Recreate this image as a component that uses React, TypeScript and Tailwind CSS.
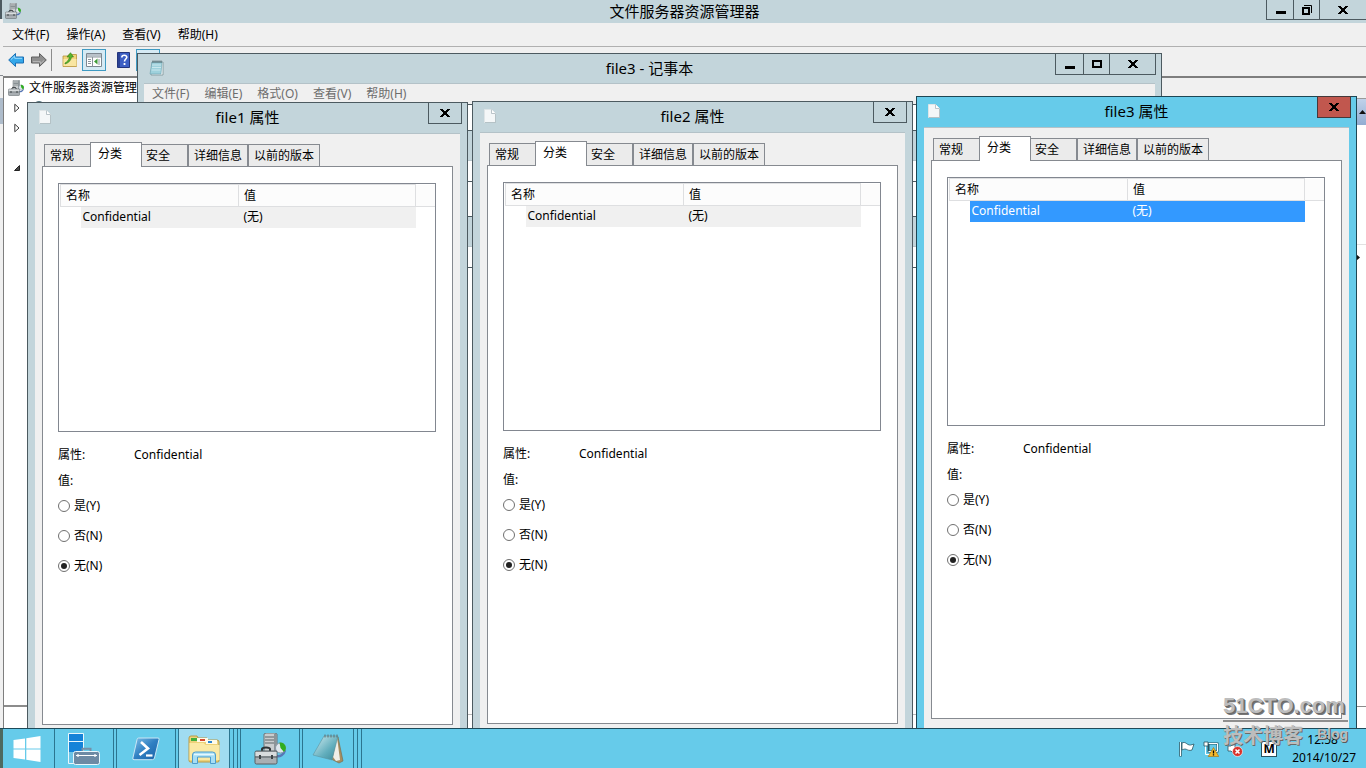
import React, { useState } from "react";
import clsx from "clsx";

const menus = ["文件(F)", "操作(A)", "查看(V)", "帮助(H)"];
const notepadMenus = ["文件(F)", "编辑(E)", "格式(O)", "查看(V)", "帮助(H)"];

function CloseGlyph() {
    return (
        <svg width="10" height="8" viewBox="0 0 10 8" shapeRendering="crispEdges" aria-hidden="true">
            <path
                d="M0 0h3v1h1v1h2V1h1V0h3v1H9v1H8v1H7v2h1v1h1v1h1v1H7V7H6V6H4v1H3v1H0V7h1V6h1V5h1V3H2V2H1V1H0z"
                fill="#000"
            />
        </svg>
    );
}

function MinimizeGlyph() {
    return (
        <svg width="10" height="9" viewBox="0 0 10 9" aria-hidden="true">
            <path d="M0 6h10v3H0z" fill="#000" />
        </svg>
    );
}

function MaximizeGlyph() {
    return (
        <svg width="10" height="8" viewBox="0 0 10 8" aria-hidden="true">
            <path d="M1 1h8v6H1z" fill="none" stroke="#000" strokeWidth="2" />
        </svg>
    );
}

function RestoreGlyph() {
    return (
        <svg width="10" height="10" viewBox="0 0 10 10" aria-hidden="true">
            <path d="M1 3h6v6H1z" fill="none" stroke="#000" strokeWidth="2" />
            <path d="M2 0.5h7.5V8" fill="none" stroke="#000" />
        </svg>
    );
}

function ServerIcon({ className }: { className?: string }) {
    return (
        <svg className={className} viewBox="0 0 32 32" aria-hidden="true">
            <path d="M10 1l2-1h9l2 1v18H10z" fill="#c9cdcf" stroke="#6b7377" />
            <path d="M20 1h3v18h-3z" fill="#8c9498" />
            <path d="M11 4h9M11 7h9M11 10h9" stroke="#5d666a" strokeWidth="1.2" />
            <path d="M31 17c-1 5-5 7-9 6" fill="none" stroke="#5877b5" strokeWidth="2.4" />
            <circle cx="26.500" cy="15" r="5" fill="#dfe6ec" stroke="#8b97a5" />
            <path d="M26.500 15l-1-5.500a5.500 5.500 0 0 1 4.500 9.500z" fill="#2fae1f" />
            <path d="M8 19v-3c0-2 8-2 8 0v3" fill="none" stroke="#2f3437" strokeWidth="2" />
            <rect x="1" y="18" width="22" height="13" rx="1.5" fill="#a9afb3" stroke="#565e62" />
            <path d="M1.5 19h21v4h-21z" fill="#d8dcde" />
            <path d="M1 24h22" stroke="#555d61" />
            <path d="M5 22h2v4H5zM17 22h2v4h-2z" fill="#3d4447" />
        </svg>
    );
}

function NotepadIcon() {
    return (
        <svg className="h-4 w-4" viewBox="0 0 16 16" aria-hidden="true">
            <path d="M3 2h11v13H2z" fill="#f7fbfc" stroke="#7b9298" strokeWidth="0.8" />
            <path d="M3 2h10l-1 12H1z" fill="#9ed1dc" stroke="#6aa3b0" strokeWidth="0.6" />
            <path d="M3 5h9M3 7.5h9M2.5 10h9" stroke="#d4edf2" strokeWidth="0.8" />
            <path d="M4 0.5v2.5M6 0.5v2.5M8 0.5v2.5M10 0.5v2.5M12 0.5v2.5" stroke="#4b5d62" strokeWidth="0.9" />
        </svg>
    );
}

function FileIcon() {
    return (
        <svg className="h-[14px] w-3" viewBox="0 0 12 14" aria-hidden="true">
            <path d="M0.5 0.5h7l4 4v9H0.5z" fill="#f4f7f8" stroke="#dfe5e7" />
            <path d="M7.5 0.5v4h4" fill="#fff" stroke="#a9b6bb" strokeWidth="0.8" />
            <path d="M11.6 5v8.6H1" fill="none" stroke="#a5b4b9" strokeWidth="0.8" />
        </svg>
    );
}

function ArrowIcon({ back }: { back?: boolean }) {
    return (
        <svg className={clsx("h-4 w-4", !back && "rotate-180")} viewBox="0 0 16 16" aria-hidden="true">
            <path
                d="M0.7 8L7.5 1.5V5h8v6h-8v3.5z"
                fill={back ? "#35a8ea" : "#8f8f8f"}
                stroke={back ? "#1b6fb4" : "#5e5e5e"}
            />
            <path d="M3 7.5L6.7 4v2.3H14" fill="none" stroke={back ? "#9bdcff" : "#bdbdbd"} />
        </svg>
    );
}

function UpFolderIcon() {
    return (
        <svg className="h-4 w-4" viewBox="0 0 16 16" aria-hidden="true">
            <path d="M1 4h5l1-1.5h7.5v12H1z" fill="#f1d47b" stroke="#b8933a" strokeWidth="0.8" />
            <path d="M1.5 7h13v7h-13z" fill="#f9e6a2" />
            <path d="M3 11c2-1 4-3 4.500-6H5L8.500 0.700 11.500 5H9.500C9 8.500 6.500 11 3 12z" fill="#58b52c" stroke="#2f7d18" strokeWidth="0.6" />
        </svg>
    );
}

function ConsoleIcon() {
    return (
        <svg className="h-4 w-4" viewBox="0 0 16 16" aria-hidden="true">
            <path d="M0.5 1.500h15v13H0.5z" fill="#fff" stroke="#7d8790" />
            <path d="M1 2h14v2.500H1z" fill="#b9c2ca" />
            <path d="M1 5h14M6.500 5v9.500" stroke="#8b959d" />
            <path d="M2 7.500h3M2 9.500h3M2 11.500h3M13 7v6" stroke="#8b959d" />
            <path d="M11.500 6.500v6L8 9.500z" fill="#3d9b35" />
        </svg>
    );
}

function HelpIcon() {
    return (
        <svg className="h-4 w-[13px]" viewBox="0 0 13 16" aria-hidden="true">
            <path d="M0.5 0.5h12v15H0.5z" fill="#3d5fc4" stroke="#23357c" />
            <path d="M1 1h2v14H1z" fill="#2b4295" />
            <path d="M4.800 5.500C4.800 2.500 10 2.700 9.800 5.300 9.700 7 7.500 7.200 7.500 9.500" fill="none" stroke="#fff" strokeWidth="1.600" />
            <path d="M6.600 11h1.800v2H6.600z" fill="#fff" />
        </svg>
    );
}

function WindowsIcon() {
    return (
        <svg className="h-[26px] w-7" viewBox="0 0 28 26" aria-hidden="true">
            <path d="M0.500 4L12 2.400v10H0.500zM13.300 2.200L27.500 0v12.400H13.300zM0.500 13.600H12v10L0.500 22zM13.300 13.600h14.200V26l-14.200-2.200z" fill="#fff" />
        </svg>
    );
}

function ServerManagerIcon() {
    return (
        <svg className="h-8 w-8" viewBox="0 0 32 32" aria-hidden="true">
            <path d="M0.500 0.500h15v30H0.500z" fill="#6cc5e8" stroke="#e9f7fc" />
            <path d="M1 1h14v7H1zM1 9h14v10H1z" fill="#1583d8" />
            <path d="M0.500 8.500h15" stroke="#e9f7fc" />
            <path d="M14.500 18.500v-2.700h8v2.700" fill="none" stroke="#7590a8" strokeWidth="2" />
            <rect x="5.500" y="18.500" width="26" height="13" rx="2" fill="#6d8aa4" stroke="#e9f7fc" />
            <path d="M8 22.500h21M10 21v3M27 21v3" stroke="#fff" strokeWidth="1.200" />
        </svg>
    );
}

function PowerShellIcon() {
    return (
        <svg className="h-6 w-7" viewBox="0 0 28 24" aria-hidden="true">
            <defs>
                <linearGradient id="psFill" x1="0" y1="0" x2="1" y2="1">
                    <stop offset="0" stopColor="#7fc0e8" />
                    <stop offset="0.5" stopColor="#2f7fc2" />
                    <stop offset="1" stopColor="#1b61a6" />
                </linearGradient>
            </defs>
            <path d="M6.500 1h19.500q1.500 0 1 1.600L22.500 21q-.5 1.700-2.200 1.700H2q-1.600 0-1.100-1.700L5 2.500Q5.300 1 6.500 1z" fill="url(#psFill)" stroke="#c9e6f5" />
            <path d="M9 5l7 6.500-8.500 6.500" fill="none" stroke="#fff" strokeWidth="2.600" />
            <path d="M14 18.500h6.500" stroke="#fff" strokeWidth="2.200" />
        </svg>
    );
}

function ExplorerIcon() {
    return (
        <svg className="h-[30px] w-8" viewBox="0 0 32 30" aria-hidden="true">
            <path d="M1 4q0-2 2-2h6l1 2h9l1 2h9q2 0 2 2v19q0 1-1.500 1H2.500Q1 28 1 26.500z" fill="#ecd27a" stroke="#b89a46" />
            <path d="M3 4h6v3H3z" fill="#3fae3d" />
            <path d="M9 4h11v4H9z" fill="#fffbe8" />
            <path d="M12 5h5v2h-5z" fill="#d7492e" />
            <path d="M18 6h11v4H18z" fill="#fffbe8" />
            <path d="M20 7h4v2h-4z" fill="#2e86d0" />
            <path d="M1.500 9h14l2 2h14v15H1.500z" fill="#fae9a5" />
            <path d="M4.500 29.500V21q0-3 3-3h17q3 0 3 3v8.500h-5V23h-13v6.500z" fill="#a6def5" stroke="#4d9ccc" />
            <path d="M6 20.500h20" stroke="#e6f8ff" strokeWidth="1.500" />
        </svg>
    );
}

function NotepadLargeIcon() {
    return (
        <svg className="h-[30px] w-8" viewBox="0 0 32 30" aria-hidden="true">
            <defs>
                <linearGradient id="padFill" x1="0" y1="0" x2="1" y2="1">
                    <stop offset="0" stopColor="#d4eef2" />
                    <stop offset="0.6" stopColor="#62aebd" />
                    <stop offset="1" stopColor="#3a8797" />
                </linearGradient>
            </defs>
            <path d="M26 3l5 24-4 2-8-4z" fill="#a58e62" stroke="#776646" strokeWidth="0.600" />
            <path d="M25 3l3 23-4 1-3-4z" fill="#f1efe8" />
            <path d="M12 2h14l-6 24L1 21z" fill="url(#padFill)" stroke="#5b94a0" strokeWidth="0.600" />
            <path d="M13 0.500v3M16 0.500v3M19 0.500v3M22 0.500v3M25 0.500v3" stroke="#5f6f73" />
        </svg>
    );
}

type TitleBarProps = {
    title: string;
    icon: React.ReactNode;
    children: React.ReactNode;
    className?: string;
};

function TitleBar({ title, icon, children, className }: TitleBarProps) {
    return (
        <header className={clsx("relative flex items-center justify-center pb-[2px]", className)}>
            <span className="absolute left-[11px]">{icon}</span>
            <h2 className="text-[15px] leading-5">{title}</h2>
            {children}
        </header>
    );
}

const captionButton = "flex items-center justify-center border-r border-[#4c5a60]";

type DialogProps = {
    name: string;
    active?: boolean;
    className: string;
};

function PropertiesDialog({ name, active, className }: DialogProps) {
    const [value, setValue] = useState("none");
    const tab = "h-[22px] border-t border-r border-[#868a90] bg-[#ebebeb] text-left";

    return (
        <section
            className={clsx(
                "absolute w-[441px] border px-[7px] pb-[7px]",
                active ? "border-[#1d4654] bg-[#66cbea]" : "border-[#4c5a60] bg-[#c3d5db]",
                className
            )}
        >
            <TitleBar title={`${name} 属性`} icon={<FileIcon />} className="-mx-[7px] h-[30px]">
                <button
                    aria-label="关闭"
                    className={clsx(
                        "absolute -top-px right-[5px] flex h-[22px] w-[34px] items-center justify-center border",
                        active ? "border-[#45383a] bg-[#c1574e]" : "border-[#4c5a60]"
                    )}
                >
                    <CloseGlyph />
                </button>
            </TitleBar>
            <div className="border-t border-[#b4c2c8] bg-[#f0f0f0] px-[7px] pt-2 pb-10">
                <div className="flex items-end pl-[2px]" role="tablist">
                    <button role="tab" className={clsx(tab, "w-[46px] border-r-0 border-l pl-[5px]")}>
                        常规
                    </button>
                    <button
                        role="tab"
                        aria-selected="true"
                        className="relative -mb-px h-[25px] w-[52px] border border-b-0 border-[#868a90] bg-white pb-[2px] pl-[7px] text-left"
                    >
                        分类
                    </button>
                    <button role="tab" className={clsx(tab, "w-[47px] border-r-2 pl-1")}>
                        安全
                    </button>
                    <button role="tab" className={clsx(tab, "w-[60px] border-r-2 pl-[5px]")}>
                        详细信息
                    </button>
                    <button role="tab" className={clsx(tab, "w-[71px] pl-[5px]")}>
                        以前的版本
                    </button>
                </div>
                <div className="min-h-[559px] border border-[#868a90] bg-white pt-4 pr-4 pl-[15px]">
                    <div className="h-[249px] border border-[#828790] pl-px">
                        <table className="w-full table-fixed border-collapse text-left">
                            <colgroup>
                                <col className="w-5" />
                                <col className="w-[158px]" />
                                <col className="w-[177px]" />
                                <col />
                            </colgroup>
                            <thead>
                                <tr className="h-[22px] bg-[#fcfcfc]">
                                    <th colSpan={2} className="border border-[#dedfe1] pl-[5px] font-normal">
                                        名称
                                    </th>
                                    <th className="border border-[#dedfe1] pl-[5px] font-normal">值</th>
                                    <th className="border-b border-[#dedfe1]"></th>
                                </tr>
                            </thead>
                            <tbody>
                                <tr className="h-[21px]">
                                    <td></td>
                                    <td className={clsx("pl-[2px]", active ? "bg-[#3399ff] text-white" : "bg-[#f0f0f0]")}>
                                        Confidential
                                    </td>
                                    <td className={clsx("pl-[5px]", active ? "bg-[#3399ff] text-white" : "bg-[#f0f0f0]")}>
                                        (无)
                                    </td>
                                    <td></td>
                                </tr>
                            </tbody>
                        </table>
                    </div>
                    <div className="mt-[14px] flex">
                        <span className="w-[76px]">属性:</span>
                        <span>Confidential</span>
                    </div>
                    <fieldset className="mt-2">
                        <legend>值:</legend>
                        <div className="mt-[7px] flex flex-col gap-3">
                            {[
                                ["yes", "是(Y)"],
                                ["no", "否(N)"],
                                ["none", "无(N)"],
                            ].map(([key, label]) => (
                                <label key={key} className="flex items-center gap-1">
                                    <input
                                        type="radio"
                                        name={name}
                                        checked={value === key}
                                        onChange={() => setValue(key)}
                                        className="h-3 w-3 appearance-none rounded-full border border-[#707070] bg-white bg-clip-content p-[2px] checked:bg-[#222222]"
                                    />
                                    {label}
                                </label>
                            ))}
                        </div>
                    </fieldset>
                </div>
            </div>
        </section>
    );
}

function Notepad() {
    return (
        <section className="absolute top-[53px] right-[204px] bottom-0 left-[137px] flex flex-col border border-b-0 border-[#4c5a60] bg-[#c3d5db] px-[6px]">
            <TitleBar title="file3 - 记事本" icon={<NotepadIcon />} className="-mx-[6px] h-[29px]">
                <div className="absolute -top-px right-[5px] flex h-[22px] border border-r-0 border-[#4c5a60]">
                    <button aria-label="最小化" className={clsx(captionButton, "w-7")}>
                        <MinimizeGlyph />
                    </button>
                    <button aria-label="最大化" className={clsx(captionButton, "w-[26px]")}>
                        <MaximizeGlyph />
                    </button>
                    <button aria-label="关闭" className={clsx(captionButton, "w-[46px]")}>
                        <CloseGlyph />
                    </button>
                </div>
            </TitleBar>
            <nav className="flex h-[21px] items-center gap-[15px] border-t border-[#b4c2c8] bg-[#f0f0f0] pl-2 text-[#6d6d6d]">
                {notepadMenus.map((item) => (
                    <button key={item}>{item}</button>
                ))}
            </nav>
            <div className="flex flex-1 flex-col border-t border-[#4c5a60] bg-white">
                <div className="h-[25px]"></div>
                <div className="h-[31px] border-y border-t-[#4c5a60] border-b-[#b4c2c8] bg-[#c3d5db]"></div>
                <div className="h-5"></div>
                <div className="h-[35px] border-t border-[#4c5a60]"></div>
                <div className="h-[31px] border-y border-t-[#4c5a60] border-b-[#b4c2c8] bg-[#c3d5db]"></div>
                <div className="h-5"></div>
                <div className="flex-1 border-t border-[#4c5a60]"></div>
                <div className="h-[14px] border-t border-[#b8b8b8]"></div>
            </div>
        </section>
    );
}

function ResourceManager() {
    return (
        <div className="flex h-full">
            <div className="flex w-[3px] flex-col bg-[#f0f0f0]">
                <div className="h-[19px] border-r border-[#c3d5db] bg-[#4c5a60]"></div>
                <div className="h-[57px] border-b border-[#868a90]"></div>
                <div className="h-[22px]"></div>
                <div className="h-[26px] bg-[#aebccb]"></div>
            </div>
            <section className="flex flex-1 flex-col bg-[#f0f0f0]">
                <TitleBar
                    title="文件服务器资源管理器"
                    icon={<ServerIcon className="-ml-[9px] h-4 w-4" />}
                    className="h-[23px] bg-[#c3d5db]"
                >
                    <div className="absolute top-0 right-0 flex h-5 border-b border-l border-[#4c5a60] pl-px">
                        <button aria-label="最小化" className={clsx(captionButton, "w-[26px]")}>
                            <MinimizeGlyph />
                        </button>
                        <button aria-label="还原" className={clsx(captionButton, "w-[26px]")}>
                            <RestoreGlyph />
                        </button>
                        <button aria-label="关闭" className="flex w-[46px] items-center justify-center">
                            <CloseGlyph />
                        </button>
                    </div>
                </TitleBar>
                <nav className="flex h-6 items-center gap-[17px] border-b border-[#b0b0b0] pl-[9px]">
                    {menus.map((item) => (
                        <button key={item}>{item}</button>
                    ))}
                </nav>
                <div className="flex h-[29px] items-center pb-1 pl-[5px]">
                    <button aria-label="后退">
                        <ArrowIcon back />
                    </button>
                    <button aria-label="前进" className="ml-[7px]">
                        <ArrowIcon />
                    </button>
                    <div className="ml-1 h-[22px] w-px bg-[#8c8c8c]"></div>
                    <button aria-label="上移" className="ml-[10px]">
                        <UpFolderIcon />
                    </button>
                    <button
                        aria-label="显示控制台树"
                        className="ml-1 flex h-[22px] w-6 items-center justify-center border border-[#3f9ac2] bg-[#d5eaf4]"
                    >
                        <ConsoleIcon />
                    </button>
                    <button aria-label="帮助" className="ml-[11px]">
                        <HelpIcon />
                    </button>
                    <button
                        aria-label="显示操作窗格"
                        className="ml-[6px] h-[22px] w-6 border border-[#3f9ac2] bg-[#d5eaf4]"
                    ></button>
                </div>
                <div className="flex flex-1 border-t-2 border-[#7e7e7e]">
                    <div className="flex w-[220px] flex-col border-x border-[#7e7e7e] bg-white">
                        <ul className="flex-1">
                            <li className="flex h-5 items-center gap-[5px] pl-1">
                                <ServerIcon className="h-4 w-4" />
                                <span>文件服务器资源管理器</span>
                            </li>
                            {[0, 1, 2, 3].map((row) => (
                                <li key={row} className="flex h-5 items-center gap-3 pl-[10px]">
                                    {row < 2 && (
                                        <svg width="6" height="10" viewBox="0 0 6 10" aria-hidden="true">
                                            <path d="M0.8 1.200v7.600L5 5z" fill="#fff" stroke="#3c3c3c" />
                                        </svg>
                                    )}
                                    {row === 3 && (
                                        <svg width="6" height="6" viewBox="0 0 6 6" aria-hidden="true">
                                            <path d="M5.500 0.500v5h-5z" fill="#4a4a4a" stroke="#222" />
                                        </svg>
                                    )}
                                    {row === 0 && (
                                        <svg width="14" height="16" viewBox="0 0 14 16" aria-hidden="true">
                                            <circle cx="7" cy="7" r="5.500" fill="#dbe8ec" stroke="#4f6f79" />
                                        </svg>
                                    )}
                                </li>
                            ))}
                        </ul>
                        <div className="h-[23px] border-t-2 border-[#8c8c8c]"></div>
                    </div>
                    <div className="flex-1"></div>
                    <div className="flex w-[180px] flex-col bg-white">
                        <div className="h-5 bg-[#f0f0f0]"></div>
                        <div className="flex h-[27px] items-center justify-end border-t border-[#9a9a9a] bg-linear-to-b from-[#c0d2ea] to-[#93add2]">
                            <svg width="7" height="4" viewBox="0 0 7 4" aria-hidden="true">
                                <path d="M0 4l3.500-4L7 4z" fill="#111" />
                            </svg>
                        </div>
                        <div className="h-[120px] border-b border-[#e2e2e2]"></div>
                        <div className="flex h-6 items-center justify-end pr-[6px]">
                            <svg width="4" height="7" viewBox="0 0 4 7" aria-hidden="true">
                                <path d="M0 0l4 3.500L0 7z" fill="#111" />
                            </svg>
                        </div>
                        <div className="flex-1"></div>
                        <div className="h-[22px] border-t border-[#8c8c8c]"></div>
                    </div>
                </div>
            </section>
        </div>
    );
}

const taskButton = "flex h-full items-center justify-center border-x border-[#2b7590]";

function Taskbar() {
    return (
        <footer className="relative flex h-10 shrink-0 items-stretch justify-between border-t border-[#1e4a59] bg-[#66cbea]">
            <div className="flex gap-[2px]">
                <button
                    aria-label="开始"
                    className="flex w-[54px] items-center justify-center border-l-[3px] border-[#4d6a60] pr-[3px]"
                >
                    <WindowsIcon />
                </button>
                <button aria-label="服务器管理器" className={clsx(taskButton, "-ml-[2px] w-[60px]")}>
                    <ServerManagerIcon />
                </button>
                <button aria-label="PowerShell" className={clsx(taskButton, "w-[60px]")}>
                    <PowerShellIcon />
                </button>
                <div className="flex border-r border-[#2b7590] pr-[3px]">
                    <button
                        aria-label="文件资源管理器"
                        className={clsx(taskButton, "w-[52px] bg-[#a0dcf1]")}
                    >
                        <ExplorerIcon />
                    </button>
                    <div className="w-[4px] border-r border-[#2b7590]"></div>
                </div>
                <button aria-label="文件服务器资源管理器" className={clsx(taskButton, "w-[60px]")}>
                    <ServerIcon className="h-8 w-8" />
                </button>
                <div className="flex border-r border-[#2b7590] pr-[3px]">
                    <button aria-label="记事本" className={clsx(taskButton, "w-[52px]")}>
                        <NotepadLargeIcon />
                    </button>
                    <div className="w-[4px] border-r border-[#2b7590]"></div>
                </div>
            </div>
            <div className="flex items-center">
                <svg className="h-4 w-4" viewBox="0 0 16 16" aria-hidden="true">
                    <path d="M1.500 1v14.500" stroke="#28535f" strokeWidth="2.600" />
                    <path d="M1.500 1v14" stroke="#fff" strokeWidth="1.200" />
                    <path d="M3 2c3-1.500 4 .5 6 1.500s3 .5 6-.5L13 9c-3 1-4 0-5.500-.6S5 8 3 9z" fill="#fff" stroke="#28535f" strokeWidth="0.800" />
                </svg>
                <svg className="ml-2 h-4 w-4" viewBox="0 0 16 16" aria-hidden="true">
                    <path d="M5.500 2.500h9v8h-9z" fill="#66cbea" stroke="#28535f" strokeWidth="2" />
                    <path d="M5.500 2.500h9v8h-9M2.500 4v9.500H8" fill="none" stroke="#fff" />
                    <path d="M1 1h4v4H1z" fill="#fff" stroke="#28535f" strokeWidth="0.800" />
                    <path d="M10.500 6.500L15.800 15.500H5.200z" fill="#f7b92b" stroke="#a36b05" strokeWidth="0.600" />
                    <path d="M10.500 9.500v3M10.500 13.200v1.300" stroke="#000" strokeWidth="1.300" />
                </svg>
                <svg className="ml-2 h-4 w-4" viewBox="0 0 16 16" aria-hidden="true">
                    <path d="M1 5h3l4-4v13l-4-4H1z" fill="#fff" stroke="#28535f" strokeWidth="0.800" />
                    <circle cx="10.500" cy="10.500" r="5" fill="#d9322a" stroke="#fff" strokeWidth="0.600" />
                    <path d="M8.500 8.500l4 4M12.500 8.500l-4 4" stroke="#fff" strokeWidth="1.600" />
                </svg>
                <span className="ml-[18px] flex h-4 w-4 items-center justify-center border border-[#28535f] bg-white font-bold">
                    M
                </span>
                <div className="ml-[15px] pr-[10px] text-right leading-[18px]">
                    <div className="pr-[18px]">12:58</div>
                    <div>2014/10/27</div>
                </div>
            </div>
        </footer>
    );
}

function Watermark() {
    return (
        <div className="pointer-events-none absolute right-[18px] bottom-[18px] w-[125px] font-bold text-[#bdbdbd]">
            <div className="border-b-2 border-[#8e8e8e] font-['Liberation_Sans',sans-serif] text-[22px] leading-[28px] whitespace-nowrap [text-shadow:1px_1px_0_#6a6a6a,2px_2px_0_#777777]">
                51CTO.com
            </div>
            <div className="flex justify-between">
                <span className="text-[20px] leading-7 [text-shadow:1px_1px_0_#6a6a6a]">技术博客</span>
                <span className="font-['Liberation_Sans',sans-serif] text-[14px] leading-6 [text-shadow:1px_1px_0_#5a5a5a]">
                    Blog
                </span>
            </div>
        </div>
    );
}

function App() {
    return (
        <div className="relative flex h-screen flex-col overflow-hidden font-['Noto_Sans','Noto_Sans_CJK_SC',sans-serif] text-[12px] leading-[18px] text-black">
            <main className="relative min-h-0 flex-1 overflow-hidden">
                <ResourceManager />
                <Notepad />
                <PropertiesDialog name="file1" className="top-[102px] left-[27px]" />
                <PropertiesDialog name="file2" className="top-[101px] left-[472px]" />
                <PropertiesDialog name="file3" active className="top-[96px] left-[916px]" />
            </main>
            <Taskbar />
            <Watermark />
        </div>
    );
}

export default App;
